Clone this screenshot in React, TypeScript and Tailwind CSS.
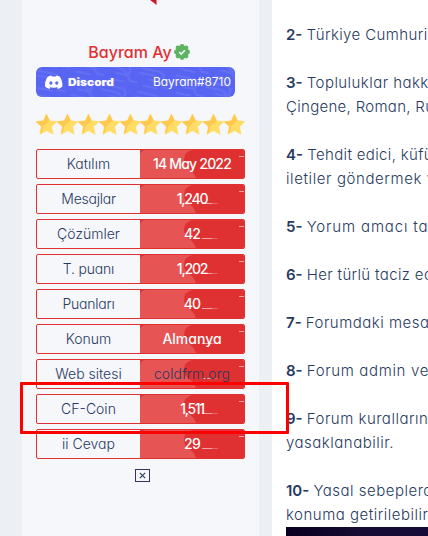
import React from "react";

type Stat = { label: string; value: string; lc: string; vc: string };

const stats: Stat[] = [
  { label: "Katılım", value: "14 May 2022", lc: "tracking-[0.05px]", vc: "font-medium text-white tracking-[-0.8px]" },
  { label: "Mesajlar", value: "1,240", lc: "tracking-[-0.25px]", vc: "font-medium text-white tracking-[-1.2px]" },
  { label: "Çözümler", value: "42", lc: "", vc: "font-medium text-white tracking-[-0.9px]" },
  { label: "T. puanı", value: "1,202", lc: "tracking-[-0.2px]", vc: "font-medium text-white tracking-[-1.2px]" },
  { label: "Puanları", value: "40", lc: "tracking-[-0.2px]", vc: "font-medium text-white tracking-[-0.9px]" },
  { label: "Konum", value: "Almanya", lc: "", vc: "font-medium text-white" },
  { label: "Web sitesi", value: "coldfrm.org", lc: "", vc: "font-light tracking-[0.05px]" },
  { label: "CF-Coin", value: "1,511", lc: "", vc: "font-medium text-white tracking-[-1.3px]" },
  { label: "ii Cevap", value: "29", lc: "", vc: "font-medium text-white tracking-[-0.7px]" },
];

const rules = [
  { n: "2-", lines: ["Türkiye Cumhuri"], t: ["tracking-[0.4px]"] },
  { n: "3-", lines: ["Topluluklar hakk", "Çingene, Roman, Ru"], t: ["tracking-[0.45px]", "tracking-[0.3px]"] },
  { n: "4-", lines: ["Tehdit edici, küfü", "iletiler göndermek v"], t: ["tracking-[0.35px]", "tracking-[0.6px]"] },
  { n: "5-", lines: ["Yorum amacı ta"], t: ["tracking-[0.85px]"] },
  { n: "6-", lines: ["Her türlü taciz ed"], t: ["tracking-[0.35px]"] },
  { n: "7-", lines: ["Forumdaki mesa"], t: ["tracking-[0.5px]"] },
  { n: "8-", lines: ["Forum admin ve"], t: ["tracking-[0.65px]"] },
  { n: "9-", lines: ["Forum kuralların", "yasaklanabilir."], t: ["tracking-[0.5px]", "tracking-[0.5px]"] },
  { n: "10-", lines: ["Yasal sebeplerd", "konuma getirilebilir"], t: ["tracking-[0.5px]", "tracking-[0.5px]"] },
];

function Star() {
  return (
    <svg viewBox="0 0 21 21" className="h-[21px] w-[20.9px] shrink-0 overflow-visible">
      <path d="M10.5 0l3.200 6.700 7.300.9-5.300 5.100 1.500 7.500-6.600-3.500L4 20.200l1.400-7.500L0 7.600l7.400-.9z" fill="#ffdc64" stroke="#ffdc64" strokeWidth=".6" strokeLinejoin="round" />
      <path d="M10.5 0l3.200 6.700L7.500 12l-2.100.7L0 7.600l7.400-.9z" fill="#ffc850" />
      <path d="M5.400 12.700l2.400-3.900-1.500 9L4 20.200z" fill="#ffc850" />
    </svg>
  );
}

function StatRow({ label, value, lc, vc }: Stat) {
  return (
    <div className="flex h-[30px] overflow-hidden rounded-[2px] border border-[#e03132] text-[14px] leading-[28px]">
      <div className={`w-[103px] text-center font-light ${lc}`}>{label}</div>
      <div className="relative flex-1 bg-[#e03132] text-center">
        <svg viewBox="0 0 104 28" className="absolute inset-0 h-full w-full">
          <path d="M0 5Q0 1 5 0H52Q44 2 44 10Q44 15 48 18Q54 22 56 28H0z" fill="#e65454" />
          <path d="M62 18.5h10M99 6.5h5" stroke="#f2a3a3" strokeWidth="1" />
          <path d="M72 18.5h6" stroke="#e86464" strokeWidth="1" />
        </svg>
        <span className={`relative ${vc}`}>{value}</span>
      </div>
    </div>
  );
}

export default function App() {
  return (
    <div className="relative flex h-[536px] w-[428px] overflow-hidden bg-[#ecf0f5] pl-[22px] font-[Inter,sans-serif] text-[#283a5e] [font-feature-settings:'cv11']">
      <aside className="flex h-full w-[237px] shrink-0 flex-col bg-[#f5f7fb] px-[14px]">
        <svg viewBox="0 0 10 6" className="ml-[113px] h-[6px] w-[10px] shrink-0">
          <path d="M1 0h6.500v5L4.500 2.500z" fill="#c5162b" />
        </svg>
        <div className="mt-[35px] flex h-[22px] items-center justify-center gap-[2px] pr-[3px]">
          <span className="text-[16px] leading-[22px] font-medium text-[#e03132]">Bayram Ay</span>
          <svg viewBox="0 0 16 16" className="h-4 w-4 shrink-0">
            <g fill="#5fb364">
              <circle cx="8" cy="8" r="6.500" />
              <circle cx="8" cy="2.400" r="2.400" />
              <circle cx="12" cy="4" r="2.400" />
              <circle cx="13.600" cy="8" r="2.400" />
              <circle cx="12" cy="12" r="2.400" />
              <circle cx="8" cy="13.600" r="2.400" />
              <circle cx="4" cy="12" r="2.400" />
              <circle cx="2.400" cy="8" r="2.400" />
              <circle cx="4" cy="4" r="2.400" />
            </g>
            <path d="M5.200 8l2 2 3.700-3.700" fill="none" stroke="#fff" strokeWidth="1.600" />
          </svg>
        </div>
        <div className="mt-[4px] flex h-[30px] w-[199px] shrink-0 items-center overflow-hidden rounded-[6px] bg-[#5865f2] text-white">
          <svg viewBox="0 0 199 30" className="h-[30px] w-[199px] shrink-0">
            <defs>
              <pattern id="waves" width="34" height="24" patternUnits="userSpaceOnUse" patternTransform="rotate(12)">
                <path d="M2 3h17q6 0 6 5t-6 5h-8M0 8h15q4 0 7 4l5 6h7M6 20h15" fill="none" stroke="#6470f3" strokeWidth="2.200" />
              </pattern>
            </defs>
            <rect width="199" height="30" fill="url(#waves)" />
            <path
              fill="#fff"
              transform="translate(9 6.500) scale(.735)"
              d="M20.317 4.370a19.800 19.800 0 0 0-4.885-1.515l-.69 1.280a18.300 18.300 0 0 0-5.484 0l-.69-1.280a19.700 19.700 0 0 0-4.885 1.515C.533 9.046-.32 13.580.099 18.057a19.900 19.900 0 0 0 5.993 3.030l1.226-1.994-1.872-.9.370-.29c3.928 1.793 8.180 1.793 12.062 0l.370.3-1.873.89 1.226 1.994a19.800 19.800 0 0 0 6.002-3.030c.5-5.177-.838-9.674-3.286-13.687zM8.020 15.330c-1.183 0-2.157-1.085-2.157-2.419 0-1.333.955-2.419 2.157-2.419 1.210 0 2.176 1.096 2.157 2.420 0 1.333-.956 2.418-2.157 2.418zm7.975 0c-1.183 0-2.157-1.085-2.157-2.419 0-1.333.955-2.419 2.157-2.419 1.210 0 2.176 1.096 2.157 2.420 0 1.333-.946 2.418-2.157 2.418z"
            />
            <text x="32" y="18.500" fill="#fff" fontSize="10" fontWeight="900" textLength="46" lengthAdjust="spacingAndGlyphs">
              Discord
            </text>
            <text x="117" y="19" fill="#fff" fontSize="12" textLength="78" lengthAdjust="spacingAndGlyphs">
              Bayram#8710
            </text>
          </svg>
        </div>
        <div className="mt-[17px] flex w-[209px]">
          {Array.from({ length: 10 }, (_, i) => (
            <Star key={i} />
          ))}
        </div>
        <div className="mt-[14px] flex flex-col gap-[5px]">
          {stats.map((s) => (
            <StatRow key={s.label} {...s} />
          ))}
        </div>
        <div className="mt-[10px] ml-[99px] flex h-[13px] w-[15px] shrink-0 items-center justify-center border border-[#38305f]">
          <svg viewBox="0 0 7 7" className="h-[7px] w-[7px]">
            <path d="M.8.800l5.400 5.400M6.200.800L.8 6.200" stroke="#283a5e" strokeWidth="1.100" />
          </svg>
        </div>
      </aside>
      <main className="ml-[13px] w-[156px] shrink-0 overflow-hidden bg-white pt-[23px] pl-[14px]">
        <div className="flex flex-col gap-6 text-[15px] leading-6 font-light whitespace-nowrap">
          {rules.map((r) => (
            <p key={r.n}>
              <b className="font-semibold">{r.n}</b> <span className={r.t[0]}>{r.lines[0]}</span>
              {r.lines[1] && <br />}
              {r.lines[1] && <span className={r.t[1]}>{r.lines[1]}</span>}
            </p>
          ))}
        </div>
        <div className="h-[9px] bg-gradient-to-r from-[#080020] via-[#160b32] to-[#160b38]" />
      </main>
      <div className="absolute top-[382px] left-[20px] h-[52px] w-[269px] rounded-[1px] border-3 border-[#ff0000]" />
    </div>
  );
}
